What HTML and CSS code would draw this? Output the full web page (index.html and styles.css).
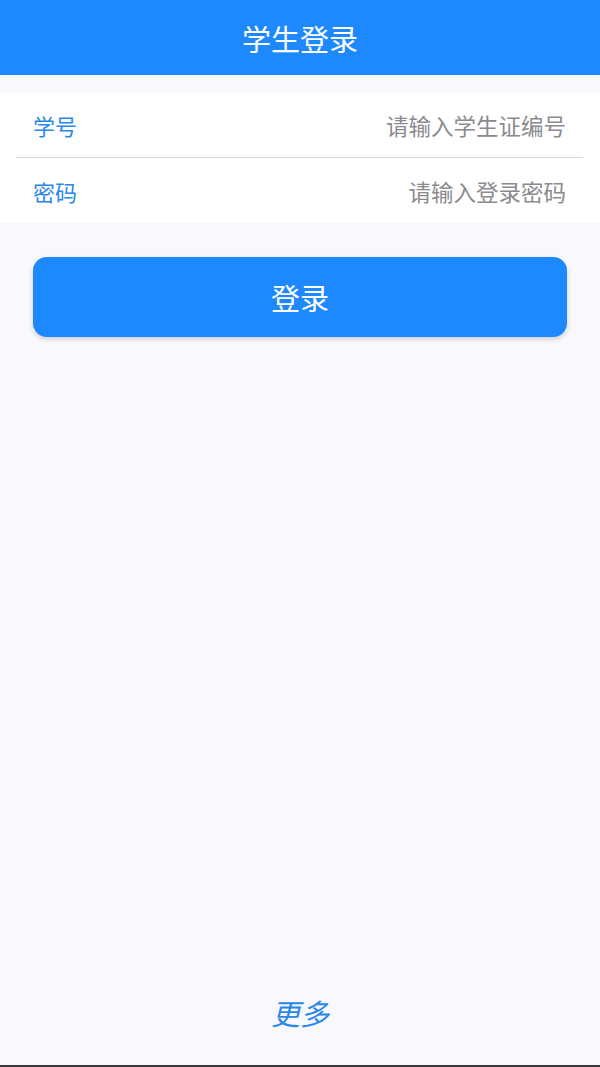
FILE: index.html
```html
<!DOCTYPE html>
<html lang="zh">
<head>
<meta charset="utf-8">
<link rel="stylesheet" href="styles.css">
</head>
<body>
<div class="page">
  <header class="topbar">学生登录</header>
  <section class="form">
    <div class="row">
      <span class="label">学号</span>
      <span class="placeholder">请输入学生证编号</span>
    </div>
    <div class="divider"></div>
    <div class="row">
      <span class="label">密码</span>
      <span class="placeholder">请输入登录密码</span>
    </div>
  </section>
  <div class="btn-wrap">
    <div class="btn">登录</div>
  </div>
  <div class="spacer"></div>
  <footer class="more">更多</footer>
  <div class="bottom-line"></div>
</div>
</body>
</html>
```
FILE: styles.css
```css
html, body {
  margin: 0;
  padding: 0;
}
body {
  background: #f9f8fc;
  font-family: "Noto Sans CJK SC", "Noto Sans", sans-serif;
}
.page {
  width: 600px;
  height: 1067px;
  display: flex;
  flex-direction: column;
}
.topbar {
  height: 75px;
  background: #1e88ff;
  color: #ffffff;
  font-size: 29px;
  display: flex;
  align-items: center;
  justify-content: center;
  flex-shrink: 0;
}
.form {
  margin-top: 18px;
  background: #ffffff;
  display: flex;
  flex-direction: column;
}
.row {
  height: 64px;
  display: flex;
  align-items: center;
  justify-content: space-between;
  padding: 0 34px 0 33px;
  font-size: 22px;
}
.label {
  color: #2a87ea;
}
.placeholder {
  color: #8b8b8f;
  font-size: 22.5px;
}
.divider {
  height: 1px;
  background: #d9d8dd;
  margin: 0 17px 0 16px;
}
.form .row:last-child {
  height: 65px;
}
.btn-wrap {
  padding: 34px 33px 0 33px;
}
.btn {
  height: 80px;
  border-radius: 14px;
  background: #1e88ff;
  color: #ffffff;
  font-size: 29px;
  display: flex;
  align-items: center;
  justify-content: center;
  box-shadow: 0 2px 5px rgba(0, 0, 0, 0.18);
}
.spacer {
  flex: 1;
}
.more {
  text-align: center;
  color: #2a87ea;
  font-size: 29px;
  font-style: italic;
  line-height: 40px;
  padding-bottom: 33px;
}
.bottom-line {
  height: 2px;
  background: #3a3a3a;
  flex-shrink: 0;
}
```
